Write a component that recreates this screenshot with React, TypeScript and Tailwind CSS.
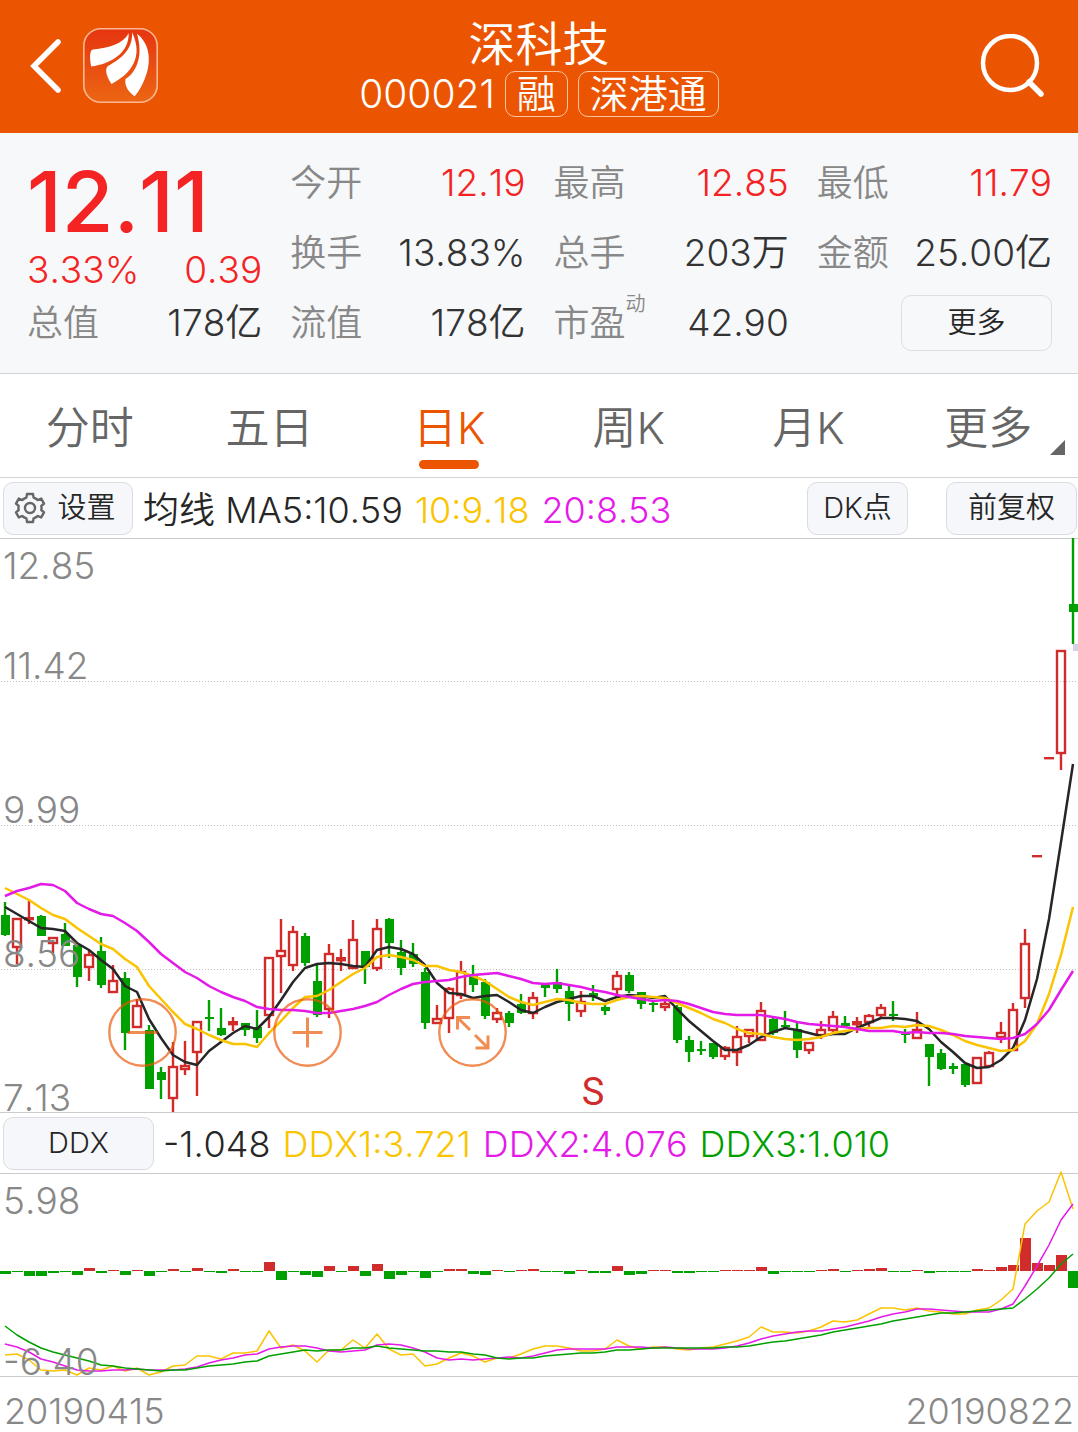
import React, { useState } from 'react';

type Candle = [up: number, high: number, top: number, bottom: number, low: number];

const STEP = 12;
const START = 5;
const RED = '#d02c2c';
const GREEN = '#00a000';
const YELLOW = '#fac400';
const MAGENTA = '#e31ae8';
const BLACK = '#262626';

// [up/down, high, body top, body bottom, low]
const candles: Candle[] = [
  [0, 902, 915, 935, 936], [1, 918, 918, 948, 964], [1, 901, 917, 920, 924], [0, 915, 916, 936, 936],
  [1, 937, 937, 944, 953], [0, 923, 934, 946, 946], [0, 945, 945, 977, 987], [1, 951, 954, 968, 981],
  [0, 937, 951, 985, 988], [1, 965, 980, 993, 993], [0, 972, 978, 1033, 1050], [1, 999, 1005, 1028, 1028],
  [0, 1025, 1030, 1089, 1089], [0, 1067, 1072, 1080, 1099], [1, 1042, 1066, 1099, 1112], [1, 1041, 1065, 1070, 1075],
  [1, 1021, 1021, 1053, 1096], [0, 1000, 1017, 1019, 1031], [0, 1008, 1028, 1035, 1036], [1, 1017, 1021, 1025, 1031],
  [0, 1023, 1023, 1030, 1036], [0, 1010, 1027, 1038, 1043], [1, 957, 957, 1016, 1028], [1, 919, 950, 957, 993],
  [1, 926, 931, 966, 971], [0, 933, 936, 963, 966], [0, 965, 981, 1015, 1017], [1, 944, 953, 1010, 1018],
  [1, 949, 957, 961, 971], [1, 920, 939, 969, 969], [0, 951, 951, 967, 984], [1, 919, 928, 969, 971],
  [0, 918, 919, 943, 958], [0, 940, 952, 968, 975], [0, 943, 954, 964, 967], [0, 968, 972, 1023, 1029],
  [1, 1005, 1018, 1024, 1024], [1, 987, 988, 1019, 1033], [1, 961, 971, 996, 999], [0, 965, 975, 985, 992],
  [0, 979, 982, 1016, 1019], [1, 1008, 1012, 1020, 1023], [0, 1011, 1013, 1023, 1027], [0, 994, 1004, 1013, 1014],
  [1, 992, 997, 1014, 1019], [0, 985, 985, 988, 997], [0, 969, 982, 989, 993], [0, 986, 991, 1004, 1021],
  [1, 991, 1001, 1012, 1017], [0, 985, 993, 996, 1001], [0, 1005, 1007, 1011, 1015], [1, 971, 975, 990, 995],
  [0, 972, 975, 991, 993], [0, 992, 992, 1004, 1009], [0, 1001, 1003, 1005, 1012], [1, 1000, 1003, 1008, 1011],
  [0, 1005, 1007, 1040, 1043], [0, 1036, 1040, 1052, 1062], [0, 1041, 1049, 1051, 1055], [0, 1043, 1043, 1057, 1059],
  [1, 1046, 1047, 1057, 1060], [1, 1026, 1036, 1053, 1066], [1, 1029, 1029, 1037, 1043], [1, 1002, 1010, 1041, 1041],
  [0, 1018, 1019, 1033, 1035], [0, 1011, 1025, 1027, 1028], [0, 1023, 1029, 1050, 1058], [1, 1042, 1042, 1051, 1054],
  [1, 1021, 1029, 1036, 1039], [1, 1011, 1016, 1031, 1035], [0, 1016, 1023, 1026, 1027], [1, 1017, 1021, 1025, 1033],
  [1, 1014, 1015, 1023, 1027], [1, 1004, 1007, 1016, 1018], [0, 1001, 1014, 1016, 1021], [0, 1029, 1034, 1035, 1043],
  [1, 1012, 1029, 1039, 1039], [0, 1044, 1044, 1057, 1086], [0, 1049, 1053, 1069, 1070], [0, 1063, 1066, 1069, 1074],
  [0, 1064, 1064, 1085, 1087], [1, 1057, 1057, 1084, 1084], [1, 1051, 1052, 1067, 1067], [1, 1022, 1032, 1038, 1043],
  [1, 1003, 1009, 1051, 1051], [1, 929, 943, 999, 1008], [1, 855, 855, 857, 857], [1, 757, 757, 759, 759],
  [1, 650, 650, 754, 770], [0, 538, 604, 612, 644],
];

const ma5 = [
  907, 914, 921, 928, 929, 931, 943, 950, 960, 969, 986, 992, 1019, 1038, 1055, 1062, 1065, 1051,
  1042, 1033, 1026, 1029, 1017, 1000, 982, 968, 964, 963, 964, 966, 967, 950, 947, 949, 954, 965,
  983, 993, 994, 998, 996, 995, 1002, 1010, 1013, 1007, 1002, 999, 996, 996, 1001, 997, 995, 996,
  998, 996, 1009, 1021, 1031, 1041, 1050, 1050, 1045, 1037, 1032, 1028, 1030, 1033, 1036, 1034, 1034, 1028,
  1023, 1018, 1018, 1019, 1021, 1029, 1042, 1052, 1063, 1068, 1067, 1060, 1048, 1020, 979, 919, 842, 764,
];

const ma10 = [
  888, 894, 900, 908, 915, 919, 928, 936, 944, 949, 959, 967, 986, 999, 1012, 1024, 1029, 1035,
  1040, 1044, 1044, 1047, 1033, 1021, 1008, 997, 996, 990, 982, 974, 968, 957, 955, 957, 960, 966,
  966, 970, 972, 976, 981, 989, 997, 1002, 1005, 1002, 999, 1000, 1003, 1004, 1004, 1000, 997, 996,
  997, 998, 1003, 1008, 1013, 1019, 1023, 1029, 1033, 1034, 1037, 1039, 1040, 1039, 1037, 1033, 1031, 1029,
  1028, 1028, 1026, 1027, 1025, 1026, 1030, 1035, 1041, 1045, 1048, 1051, 1050, 1041, 1024, 994, 955, 907,
];

const ma20 = [
  896, 891, 888, 884, 885, 891, 903, 909, 914, 916, 923, 931, 942, 954, 963, 972, 978, 986,
  992, 997, 1001, 1007, 1009, 1010, 1010, 1011, 1013, 1013, 1011, 1009, 1006, 1002, 995, 989, 984, 982,
  981, 980, 977, 975, 974, 973, 976, 979, 983, 984, 983, 985, 987, 990, 992, 995, 997, 999,
  1001, 1000, 1001, 1004, 1008, 1012, 1014, 1015, 1015, 1015, 1017, 1019, 1022, 1024, 1025, 1026, 1027, 1029,
  1031, 1031, 1031, 1033, 1032, 1033, 1033, 1034, 1036, 1037, 1038, 1039, 1038, 1034, 1024, 1010, 990, 971,
];

const ddxBars = [
  -3, -1, -5, -5, -2, -1, -4, 3, -2, 1, -4, 1, -5, -1, 2, -1, 3, -1,
  -2, 2, -1, -1, 9, -9, -1, -4, -6, 5, -1, 5, -5, 7, -8, -4, -1, -7,
  -1, 2, 2, -3, -4, 1, -1, 1, 2, -1, -1, -3, 1, -2, -2, 5, -4, -3,
  1, 1, -2, -2, -1, -1, 1, 1, 1, 4, -3, -1, -1, -1, 1, 2, -1, 1,
  2, 3, -1, -1, 1, -2, -1, -1, -1, 2, 1, 4, 6, 33, 8, 6, 16, -17,
];

const ddx1 = [
  1355, 1354, 1360, 1370, 1371, 1370, 1375, 1368, 1370, 1366, 1371, 1368, 1375, 1372, 1366, 1365, 1356, 1356,
  1359, 1353, 1353, 1351, 1331, 1348, 1345, 1351, 1362, 1350, 1350, 1340, 1348, 1334, 1349, 1355, 1354, 1366,
  1364, 1358, 1353, 1356, 1362, 1358, 1358, 1354, 1349, 1346, 1346, 1348, 1351, 1351, 1349, 1340, 1346, 1349,
  1347, 1347, 1349, 1350, 1348, 1347, 1344, 1341, 1337, 1327, 1332, 1332, 1333, 1331, 1327, 1321, 1322, 1320,
  1314, 1308, 1308, 1310, 1308, 1311, 1312, 1314, 1314, 1310, 1308, 1300, 1289, 1224, 1211, 1202, 1172, 1209,
];

const ddx2 = [
  1344, 1347, 1352, 1359, 1362, 1366, 1370, 1371, 1371, 1370, 1370, 1369, 1370, 1370, 1370, 1369, 1367, 1363,
  1360, 1358, 1355, 1354, 1349, 1347, 1346, 1346, 1348, 1351, 1352, 1351, 1350, 1345, 1344, 1345, 1348, 1352,
  1358, 1360, 1359, 1360, 1359, 1358, 1357, 1358, 1356, 1353, 1350, 1349, 1349, 1349, 1349, 1347, 1347, 1347,
  1348, 1347, 1348, 1349, 1349, 1349, 1348, 1346, 1343, 1339, 1336, 1334, 1332, 1331, 1331, 1329, 1327, 1324,
  1321, 1317, 1314, 1312, 1309, 1309, 1310, 1311, 1312, 1312, 1312, 1309, 1304, 1286, 1266, 1245, 1220, 1204,
];

const ddx3 = [
  1326, 1335, 1342, 1348, 1352, 1355, 1358, 1361, 1365, 1366, 1368, 1369, 1370, 1371, 1370, 1370, 1368, 1366,
  1365, 1364, 1362, 1361, 1356, 1354, 1352, 1350, 1351, 1350, 1350, 1348, 1348, 1346, 1348, 1349, 1350, 1351,
  1351, 1352, 1352, 1354, 1355, 1358, 1359, 1358, 1358, 1356, 1355, 1354, 1353, 1353, 1352, 1350, 1350, 1349,
  1348, 1348, 1348, 1348, 1348, 1348, 1347, 1347, 1346, 1344, 1342, 1341, 1339, 1337, 1335, 1332, 1330, 1328,
  1326, 1324, 1321, 1319, 1317, 1315, 1313, 1313, 1312, 1311, 1310, 1309, 1308, 1299, 1289, 1278, 1264, 1254,
];

const tabs = ['分时', '五日', '日K', '周K', '月K', '更多'];

const toPoints = (values: number[]) => values.map((y, i) => `${START + i * STEP},${y}`).join(' ');

const Line: React.FC<{ values: number[]; color: string; width: number }> = ({ values, color, width }) => (
  <polyline points={toPoints(values)} fill="none" stroke={color} strokeWidth={width} strokeLinejoin="round" />
);

const AxisLabel: React.FC<{ y: number; children: React.ReactNode }> = ({ y, children }) => (
  <text x={3} y={y} fontSize={37} fill="#888888">
    {children}
  </text>
);

const CandleShape: React.FC<{ x: number; candle: Candle }> = ({ x, candle }) => {
  const [up, high, top, bottom, low] = candle;
  if (!up) {
    return (
      <g fill={GREEN}>
        <rect x={x - 1.2} y={high} width={2.4} height={low - high} />
        <rect x={x - 4} y={top} width={9} height={bottom - top} />
      </g>
    );
  }
  return (
    <g fill={RED}>
      {top > high && <rect x={x - 1.2} y={high} width={2.4} height={top - high} />}
      {low > bottom && <rect x={x - 1.2} y={bottom} width={2.4} height={low - bottom} />}
      {bottom - top > 4 ? (
        <rect x={x - 4} y={top + 1} width={8} height={bottom - top - 2} fill="none" stroke={RED} strokeWidth={2.4} />
      ) : (
        <rect x={x - 5} y={top} width={10} height={bottom - top + 0.4} />
      )}
    </g>
  );
};

const KLineChart: React.FC = () => (
  <svg viewBox="0 539 1078 573" className="block w-full h-auto overflow-visible" role="img" aria-label="日K">
    {[681, 825, 969].map((y) => (
      <line key={y} x1={1} x2={1078} y1={y + 0.5} y2={y + 0.5} stroke="#c0c0c0" strokeDasharray="1 2" />
    ))}
    {candles.map((candle, i) => (
      <CandleShape key={i} x={START + i * STEP} candle={candle} />
    ))}
    <rect x={1073} y={644} width={5} height={7} fill="#d5d0e4" />
    <Line values={ma5} color={BLACK} width={2.5} />
    <Line values={ma10} color={YELLOW} width={2.5} />
    <Line values={ma20} color={MAGENTA} width={2.5} />
    <AxisLabel y={579}>12.85</AxisLabel>
    <AxisLabel y={679}>11.42</AxisLabel>
    <AxisLabel y={823}>9.99</AxisLabel>
    <AxisLabel y={967}>8.56</AxisLabel>
    <AxisLabel y={1111}>7.13</AxisLabel>
    <text x={593} y={1105} fontSize={38} textAnchor="middle" fill={RED} className="font-['Roboto',sans-serif] font-normal">
      S
    </text>
  </svg>
);

const DdxChart: React.FC = () => (
  <svg viewBox="0 1174 1078 202" className="block w-full h-auto overflow-visible" role="img" aria-label="DDX">
    {ddxBars.map((v, i) => (
      <rect
        key={i}
        x={i * STEP}
        y={v > 0 ? 1271 - v : 1271}
        width={11}
        height={Math.abs(v)}
        fill={v > 0 ? RED : GREEN}
      />
    ))}
    <Line values={ddx1} color={YELLOW} width={1.5} />
    <Line values={ddx2} color={MAGENTA} width={1.5} />
    <Line values={ddx3} color={GREEN} width={1.5} />
    <AxisLabel y={1214}>5.98</AxisLabel>
    <AxisLabel y={1375}>-6.40</AxisLabel>
  </svg>
);

const Quote: React.FC<{ label: string; value: string; red?: boolean; sup?: string }> = ({ label, value, red, sup }) => (
  <div className="flex items-center justify-between h-[70px]">
    <span className="relative text-[36px] text-[#888888]">
      {label}
      {sup && <sup className="absolute left-full -top-0.5 text-[20px] leading-none">{sup}</sup>}
    </span>
    <span className={`text-[37px] ${red ? 'text-[#f42424]' : 'text-[#333333]'}`}>{value}</span>
  </div>
);

const ChartButton: React.FC<{ className: string; children: React.ReactNode }> = ({ className, children }) => (
  <button
    className={`flex items-center justify-center h-[53px] shrink-0 rounded-[10px] border border-[#d9dce0] bg-[#f6f7fa] text-[29px] text-[#262626] ${className}`}
  >
    {children}
  </button>
);

const RoundButton: React.FC<{ label: string; path: string }> = ({ label, path }) => (
  <button aria-label={label} className="size-[69px]">
    <svg viewBox="0 0 69 69" fill="none" stroke="#ea5504" strokeOpacity={0.68}>
      <circle cx="34.5" cy="34.5" r="33.2" strokeWidth="2.4" />
      <path d={path} strokeWidth="3" />
    </svg>
  </button>
);

const Header: React.FC = () => (
  <header className="grid grid-cols-[1fr_auto_1fr] items-start bg-[#eb5502] text-white pt-5 pb-4 px-[30px]">
    <div className="flex items-center gap-[21px] pt-2">
      <button aria-label="返回">
        <svg width="32" height="56" viewBox="0 0 32 56" fill="none" stroke="currentColor" strokeWidth="5.5">
          <path d="M28 4 L4 28 L28 52" strokeLinecap="round" strokeLinejoin="miter" />
        </svg>
      </button>
      <svg width="75" height="75" viewBox="0 0 75 75" role="img" aria-label="logo">
        <defs>
          <linearGradient id="logoBg" x1="0" y1="0" x2="0" y2="1">
            <stop offset="0" stopColor="#e63510" />
            <stop offset="1" stopColor="#ec6613" />
          </linearGradient>
        </defs>
        <rect x="0.8" y="0.8" width="73.4" height="73.4" rx="17" fill="url(#logoBg)" stroke="#f9b795" strokeWidth="1.6" />
        <g fill="#fff">
          <path d="M45.7 5.3 C40 16 26 20 10 21.5 C6.5 22 6.5 30 8.2 38.5 C28 36 46 25 45.7 5.3 Z" />
          <path d="M49 4.3 C50 20 40 30 25 38 C22 40 22.5 47 28.5 56 C48 46 61 29 49 4.3 Z" />
          <path d="M54 5.7 C65 14 67.5 28 65 40 C62.5 52 57 62 51.7 68.3 C47 65 41 59 42.5 51 C55 43 60 26 54 5.7 Z" />
        </g>
      </svg>
    </div>
    <div className="flex flex-col items-center gap-[3px]">
      <h1 className="text-[47px] leading-[48px]">深科技</h1>
      <div className="flex items-center gap-[10px] text-[39px] leading-[46px]">
        <span>000021</span>
        <span className="flex items-center h-[46px] px-[11px] border border-[#f9c4a3] rounded-[10px]">融</span>
        <span className="flex items-center h-[46px] px-[11px] border border-[#f9c4a3] rounded-[10px]">深港通</span>
      </div>
    </div>
    <button aria-label="搜索" className="justify-self-end mt-3.5">
      <svg width="68" height="68" viewBox="0 0 68 68" fill="none" stroke="currentColor" strokeWidth="4.5" strokeLinecap="round">
        <circle cx="30" cy="29" r="27" />
        <path d="M49 48 L61 60" strokeWidth="5.5" />
      </svg>
    </button>
  </header>
);

const App: React.FC = () => {
  const [activeTab, setActiveTab] = useState('日K');

  return (
    <div className="bg-white font-['Inter','Noto_Sans_CJK_SC',sans-serif] font-[350] [font-kerning:none]">
      <Header />

      <section className="grid grid-cols-4 gap-x-7 pl-[27px] pr-[26px] pt-[15px] pb-[15px] bg-[#f7f8fa] border-b border-[#d4d4d4]">
        <div className="pt-3">
          <div className="text-[84px] leading-[84px] font-medium text-[#f42424]">12.11</div>
          <div className="flex items-center justify-between h-[52px] text-[37px] text-[#f42424]">
            <span>3.33%</span>
            <span>0.39</span>
          </div>
          <div className="flex items-center justify-between h-[54px]">
            <span className="text-[36px] text-[#888888]">总值</span>
            <span className="text-[37px] text-[#333333]">178亿</span>
          </div>
        </div>
        <div>
          <Quote label="今开" value="12.19" red />
          <Quote label="换手" value="13.83%" />
          <Quote label="流值" value="178亿" />
        </div>
        <div>
          <Quote label="最高" value="12.85" red />
          <Quote label="总手" value="203万" />
          <Quote label="市盈" value="42.90" sup="动" />
        </div>
        <div>
          <Quote label="最低" value="11.79" red />
          <Quote label="金额" value="25.00亿" />
          <div className="flex items-center justify-end h-[70px]">
            <button className="w-[151px] h-14 rounded-[10px] border border-[#dcdee0] text-[29px] text-[#262626]">
              更多
            </button>
          </div>
        </div>
      </section>

      <nav className="grid grid-cols-6 border-b border-[#d4d4d4]">
        {tabs.map((tab) => (
          <button
            key={tab}
            onClick={() => setActiveTab(tab)}
            className={`relative h-[103px] pt-1 text-[44px] ${activeTab === tab ? 'text-[#eb5502]' : 'text-[#666666]'}`}
          >
            {tab}
            {activeTab === tab && (
              <span className="absolute bottom-2 left-1/2 -translate-x-1/2 w-[60px] h-[9px] rounded-full bg-[#eb5502]" />
            )}
            {tab === '更多' && (
              <svg className="absolute bottom-[22px] right-[13px]" width="15" height="15" viewBox="0 0 15 15">
                <path d="M15 0 V15 H0 Z" fill="#666666" />
              </svg>
            )}
          </button>
        ))}
      </nav>

      <div className="flex items-center h-[61px] pl-[3px] pr-px border-b border-[#cccccc]">
        <ChartButton className="w-[130px] gap-[11px] pr-1.5">
          <svg width="32" height="32" viewBox="0 0 32 32" fill="none" stroke="#666666" strokeWidth="2.4" strokeLinejoin="round">
            <path d="M13 2 H19 L19.6 5.6 Q22 6.4 23.8 8 L27.2 6.6 L30 11.6 L27.3 14 Q27.8 16 27.3 18 L30 20.4 L27.2 25.4 L23.8 24 Q22 25.6 19.6 26.4 L19 30 H13 L12.4 26.4 Q10 25.6 8.2 24 L4.8 25.4 L2 20.4 L4.7 18 Q4.2 16 4.7 14 L2 11.6 L4.8 6.6 L8.2 8 Q10 6.4 12.4 5.6 Z" />
            <circle cx="16" cy="16" r="5" />
          </svg>
          设置
        </ChartButton>
        <div className="flex flex-1 gap-3 pl-[10px] pt-1 text-[36px]">
          <span className="text-[#262626]">均线 MA5:10.59</span>
          <span className="text-[#fac400]">10:9.18</span>
          <span className="text-[#e31ae8]">20:8.53</span>
        </div>
        <div className="flex gap-[38px]">
          <ChartButton className="w-[101px]">DK点</ChartButton>
          <ChartButton className="w-[131px]">前复权</ChartButton>
        </div>
      </div>

      <div className="relative border-b border-[#cccccc]">
        <KLineChart />
        <div className="absolute left-[108px] bottom-[45px] flex gap-24">
          <RoundButton label="缩小" path="M19.5 34.5 H49.5" />
          <RoundButton label="放大" path="M19.5 34.5 H49.5 M34.5 19.5 V49.5" />
          <RoundButton label="全屏" path="M32 32 L19.5 19.5 M19.5 31.5 V19.5 H32 M37 37 L50 50 M50 37.5 V50 H37.5" />
        </div>
      </div>

      <div className="flex items-center h-[61px] pl-[3px] border-b border-[#cccccc]">
        <ChartButton className="w-[151px]">DDX</ChartButton>
        <div className="flex gap-3 pl-[9px] pt-0.5 text-[36px]">
          <span className="text-[#262626]">-1.048</span>
          <span className="text-[#fac400]">DDX1:3.721</span>
          <span className="text-[#e31ae8]">DDX2:4.076</span>
          <span className="text-[#00a000]">DDX3:1.010</span>
        </div>
      </div>

      <div className="border-b border-[#cccccc]">
        <DdxChart />
      </div>

      <div className="flex items-center justify-between h-[55px] pt-3 px-1 text-[36px] text-[#888888]">
        <span>20190415</span>
        <span>20190822</span>
      </div>
    </div>
  );
};

export default App;
